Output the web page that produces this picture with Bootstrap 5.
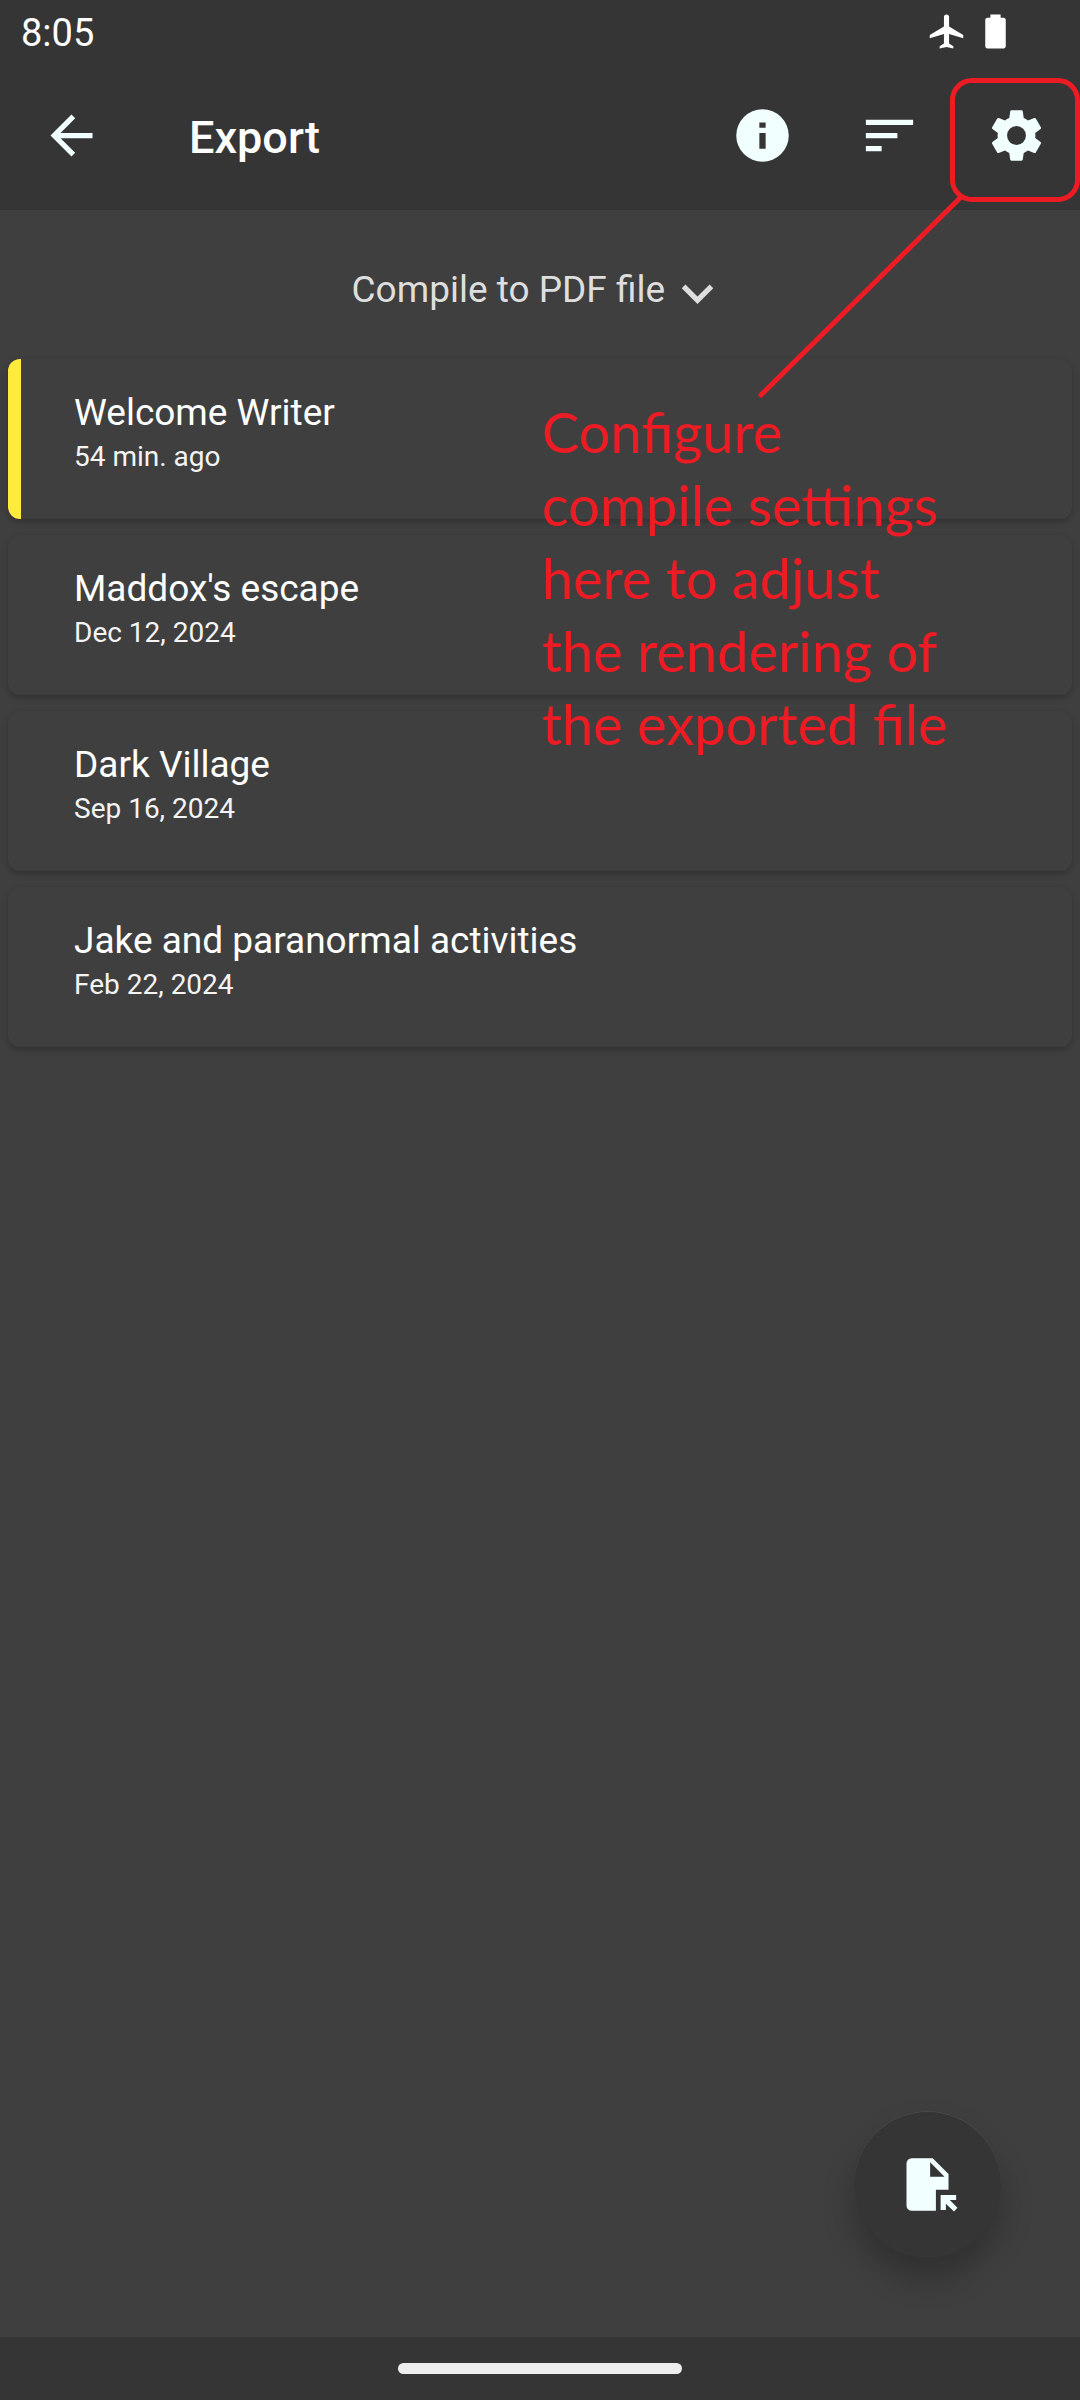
<!DOCTYPE html>
<html lang="en" data-bs-theme="dark">
<head>
<meta charset="utf-8">
<meta name="viewport" content="width=device-width, initial-scale=1">
<title>Export</title>
<link rel="stylesheet" href="https://cdn.jsdelivr.net/npm/bootstrap@5.3.0/dist/css/bootstrap.min.css">
<style>
  :root { --bar: #353535; --page: #3f3f3f; --ice: #f2ffff; --note: #ed1c24; }
  body { background: var(--page); color: #f2f2f2; font-family: Roboto, "Liberation Sans", sans-serif; }
  svg { display: block; fill: currentColor; }
  .ico { width: 63px; height: 63px; }
  .top-bar, .bottom-bar { background: var(--bar); }
  .status { height: 60px; padding: 6px 64px 0 21px; font-size: 38px; line-height: 54px; color: #fff; }
  .status svg { width: 41px; height: 41px; margin-bottom: 3px; }
  .actions { height: 150px; padding: 0 0 0 8px; color: var(--ice); }
  .actions .btn { width: 127px; height: 127px; color: var(--ice); }
  .actions h1 { font-size: 45px; font-weight: 500; line-height: 60px; padding: 6px 0 0 54px; }
  .callout-box { position: absolute; inset: 6px 0 -3px -3px; border: 5px solid var(--note); border-radius: 22px; pointer-events: none; }
  .callout-line { position: absolute; top: 120px; right: 112px; width: 210px; height: 206px; fill: none; stroke: var(--note); stroke-width: 5; stroke-linecap: round; pointer-events: none; z-index: 3; }
  .callout-text { position: absolute; top: 185px; right: 96px; width: 442px; margin: 0; font-family: Lato, "Open Sans", sans-serif; font-size: 56px; line-height: 73px; color: var(--note); pointer-events: none; z-index: 3; }
  .format { padding: 52px 0 34px; color: #dedede; }
  .format select { appearance: none; background: none; border: 0; padding: 0; color: inherit; font-size: 37px; line-height: 56px; height: 56px; }
  .format select option { background: var(--page); }
  .projects { gap: 16px; padding: 0 8px; }
  .project { display: block; position: relative; padding: 30px 66px 42px; border-radius: 12px; background: var(--page); color: #f4f4f4; text-decoration: none; overflow: hidden; box-shadow: 0 3px 7px rgba(0, 0, 0, .2); }
  .project.current { border-left: 13px solid #ffeb3b; padding-left: 53px; }
  .project h2 { margin: 0; font-size: 37px; font-weight: 400; line-height: 48px; }
  .project time { display: block; font-size: 28px; line-height: 40px; }
  .fab { position: absolute; right: 79px; bottom: 79px; width: 147px; height: 147px; border-radius: 50%; background: var(--bar); color: var(--ice); border: 0; box-shadow: inset 0 1px 0 #4a4a4a, 0 20px 32px rgba(0, 0, 0, .24); }
  .bottom-bar { height: 63px; }
  .pill { width: 284px; height: 11px; border-radius: 6px; background: #eee; }
</style>
<script src="https://cdn.jsdelivr.net/npm/bootstrap@5.3.0/dist/js/bootstrap.bundle.min.js"></script>
</head>
<body class="d-flex flex-column min-vh-100">
  <header class="top-bar">
    <div class="status d-flex align-items-center justify-content-between">
      <span>8:05</span>
      <div class="d-flex" aria-hidden="true">
        <svg viewBox="0 0 24 24"><path d="M21.8 16v-2l-8.3-5V3.5a1.5 1.5 0 0 0-3 0V9l-8.3 5v2l8.3-2.5V19L8 20.7V22l4-1 4 1v-1.300L13.500 19v-5.500z"/></svg>
        <svg class="ms-2" viewBox="0 0 24 24"><path d="M16.700 4H15V2H9v2H7.300C6.600 4 6 4.600 6 5.300v15.400c0 .7.600 1.300 1.300 1.300h9.400c.7 0 1.300-.6 1.300-1.300V5.300c0-.7-.6-1.300-1.300-1.300z"/></svg>
      </div>
    </div>
    <nav class="actions d-flex align-items-center">
      <button type="button" class="btn border-0 p-0 d-flex align-items-center justify-content-center" aria-label="Back">
        <svg class="ico" viewBox="0 0 24 24"><path d="M20 11H7.830l5.590-5.590L12 4l-8 8 8 8 1.410-1.410L7.830 13H20z"/></svg>
      </button>
      <h1 class="mb-0 me-auto">Export</h1>
      <button type="button" class="btn border-0 p-0 d-flex align-items-center justify-content-center" aria-label="Info">
        <svg class="ico" viewBox="0 0 24 24"><path d="M12 2a10 10 0 1 0 0 20 10 10 0 0 0 0-20zm1.200 15h-2.400v-6h2.400zm0-8h-2.400V7h2.400z"/></svg>
      </button>
      <button type="button" class="btn border-0 p-0 d-flex align-items-center justify-content-center" aria-label="Sort">
        <svg class="ico" viewBox="0 0 24 24"><path d="M3 18h6v-2H3zM3 6v2h18V6zm0 7h12v-2H3z"/></svg>
      </button>
      <div class="position-relative">
        <button type="button" class="btn border-0 p-0 d-flex align-items-center justify-content-center" aria-label="Compile settings">
          <svg class="ico" viewBox="0 0 24 24"><path d="M19.140 12.940c.04-.3.06-.61.06-.94 0-.32-.02-.64-.07-.94l2.030-1.580c.18-.14.23-.41.12-.61l-1.920-3.320c-.12-.22-.37-.29-.59-.22l-2.390.96c-.5-.38-1.030-.7-1.620-.94l-.36-2.540c-.04-.24-.24-.41-.48-.41h-3.840c-.24 0-.43.17-.47.41l-.36 2.540c-.59.24-1.130.57-1.620.94l-2.390-.96c-.22-.08-.47 0-.59.22L2.740 8.870c-.12.21-.08.47.12.61l2.030 1.580c-.05.3-.09.63-.09.94s.02.64.07.94l-2.030 1.580c-.18.14-.23.41-.12.61l1.920 3.320c.12.22.37.29.59.22l2.390-.96c.5.38 1.030.7 1.620.94l.36 2.540c.05.24.24.41.48.41h3.840c.24 0 .44-.17.47-.41l.36-2.540c.59-.24 1.130-.56 1.620-.94l2.390.96c.22.08.47 0 .59-.22l1.920-3.320c.12-.22.07-.47-.12-.61zM12 15.600a3.600 3.600 0 1 1 0-7.200 3.600 3.600 0 0 1 0 7.200z"/></svg>
        </button>
        <span class="callout-box"></span>
        <svg class="callout-line" viewBox="0 0 210 206"><path d="M203 5L3 203"/></svg>
      </div>
    </nav>
  </header>

  <main class="flex-grow-1 position-relative">
    <label class="format d-flex justify-content-center">
      <select aria-label="Export format"><option>Compile to PDF file</option></select>
      <svg class="ico" viewBox="0 0 24 24"><path d="M7.410 8.590L12 13.170l4.590-4.580L18 10l-6 6-6-6z"/></svg>
    </label>
    <div class="projects d-flex flex-column">
      <a href="#" class="project current"><h2>Welcome Writer</h2><time>54 min. ago</time></a>
      <a href="#" class="project"><h2>Maddox's escape</h2><time>Dec 12, 2024</time></a>
      <a href="#" class="project"><h2>Dark Village</h2><time>Sep 16, 2024</time></a>
      <a href="#" class="project"><h2>Jake and paranormal activities</h2><time>Feb 22, 2024</time></a>
    </div>
    <p class="callout-text">Configure<br>compile settings<br>here to adjust<br>the rendering of<br>the exported file</p>
    <button type="button" class="fab d-flex align-items-center justify-content-center" aria-label="Export file">
      <svg class="ico" viewBox="0 0 24 24"><path fill-rule="evenodd" d="M14 2H6a2 2 0 0 0-2 2v16a2 2 0 0 0 2 2h9.200v-8H20V8zM13 9V3.500L18.500 9z"/><path d="M17 16h5.900v1.900h-2.400l2.900 3-1.300 1.400-3.100-3v2.400h-2z"/></svg>
    </button>
  </main>

  <footer class="bottom-bar d-flex align-items-center justify-content-center"><div class="pill"></div></footer>
</body>
</html>
